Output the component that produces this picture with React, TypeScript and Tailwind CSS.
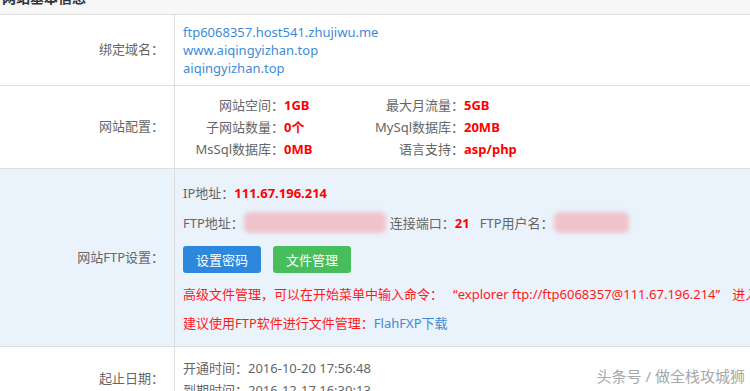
const font = 'font-["Noto_Sans","Noto_Sans_CJK_SC",sans-serif]';

const Row = ({
  label,
  children,
  className = '',
}: {
  label: string;
  children: React.ReactNode;
  className?: string;
}) => (
  <div className={`flex border-b border-[#dddddd] ${className}`}>
    <div className="w-[175px] shrink-0 border-r border-[#dddddd] flex items-center justify-end pr-[10px]">
      {label}
    </div>
    <div className="flex-1 pl-[8px] whitespace-nowrap">{children}</div>
  </div>
);

const Blur = ({ w }: { w: number }) => (
  <span
    className="inline-block h-[21px] align-middle bg-[#efc3cb] blur-[2px] rounded-[6px]"
    style={{ width: w }}
  />
);

export default function App() {
  const cfg = [
    ['网站空间：', '1GB', '最大月流量：', '5GB'],
    ['子网站数量：', '0个', 'MySql数据库：', '20MB'],
    ['MsSql数据库：', '0MB', '语言支持：', 'asp/php'],
  ];

  return (
    <div
      className={`relative w-[750px] h-[391px] overflow-hidden bg-white text-[13px] text-[#666666] ${font}`}
    >
      <div className="h-[15px] overflow-hidden bg-[#f7f7f7] border-b border-[#dddddd] pl-[2px]">
        <div className="-mt-[13px] leading-[22px] text-[14px] font-bold text-[#333333]">
          网站基本信息
        </div>
      </div>

      <Row label="绑定域名：">
        <div className="py-[8px] leading-[18px] text-[#3d8bd6]">
          <div>ftp6068357.host541.zhujiwu.me</div>
          <div>www.aiqingyizhan.top</div>
          <div>aiqingyizhan.top</div>
        </div>
      </Row>

      <Row label="网站配置：">
        <div className="py-[8px] pl-[1px] grid grid-cols-[100px_80px_100px_auto] leading-[22px]">
          {cfg.map(([l1, v1, l2, v2]) => (
            <>
              <span key={l1} className="text-right">{l1}</span>
              <span className="font-bold text-[#ff0000]">{v1}</span>
              <span className="text-right">{l2}</span>
              <span className="font-bold text-[#ff0000]">{v2}</span>
            </>
          ))}
        </div>
      </Row>

      <Row label="网站FTP设置：" className="bg-[#eaf2fb]">
        <div className="pt-[14px] pb-[13px] flex flex-col leading-[20px]">
          <div>
            IP地址：<span className="font-bold text-[#ff0000]">111.67.196.214</span>
          </div>
          <div className="mt-[9px] flex items-center">
            <span>FTP地址：</span>
            <Blur w={142} />
            <span className="ml-[4px]">连接端口：</span>
            <span className="font-bold text-[#ff0000]">21</span>
            <span className="ml-[10px]">FTP用户名：</span>
            <Blur w={75} />
          </div>
          <div className="mt-[13px] flex gap-[12px]">
            <button className="w-[78px] h-[27px] rounded-[3px] bg-[#2b88dd] text-white text-[13px]">
              设置密码
            </button>
            <button className="w-[78px] h-[27px] rounded-[3px] bg-[#48bd5b] text-white text-[13px]">
              文件管理
            </button>
          </div>
          <div className="mt-[11px] text-[#ff1a1a]">
            高级文件管理，可以在开始菜单中输入命令：
            <span className="ml-[10px]">“explorer ftp://ftp6068357@111.67.196.214”</span>
            <span className="ml-[12px]">进入</span>
          </div>
          <div className="mt-[9px] text-[#ff1a1a]">
            建议使用FTP软件进行文件管理：<span className="text-[#3d8bd6]">FlahFXP下载</span>
          </div>
        </div>
      </Row>

      <Row label="起止日期：">
        <div className="pt-[10px] pb-[10px] leading-[22px]">
          <div>开通时间：2016-10-20 17:56:48</div>
          <div>到期时间：2016-12-17 16:30:13</div>
        </div>
      </Row>

      <div className="absolute right-[5px] bottom-[4px] text-[15px] text-[#a8a8a8] [text-shadow:0_0_2px_#fff]">
        头条号 / 做全栈攻城狮
      </div>
    </div>
  );
}
